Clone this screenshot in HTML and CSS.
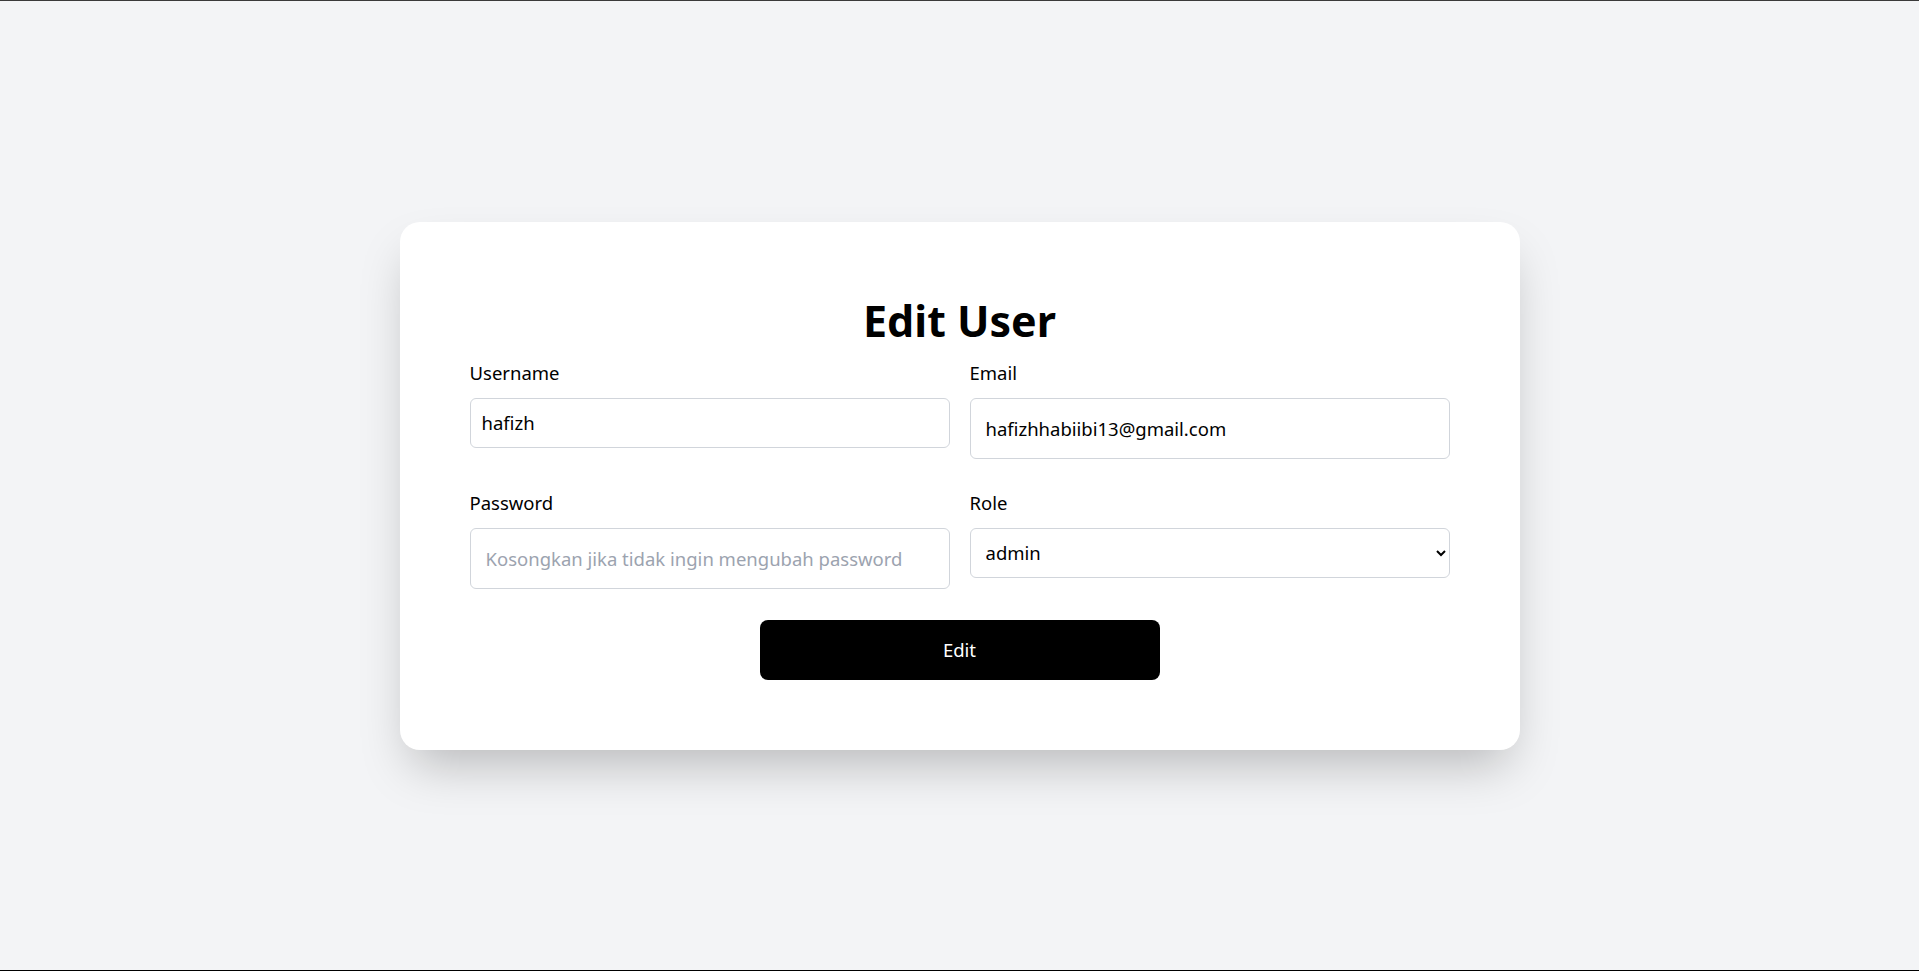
FILE: index.html
```html
<!DOCTYPE html>
<html lang="id">
<head>
<meta charset="utf-8">
<title>Edit User</title>
<link rel="stylesheet" href="styles.css">
</head>
<body>
<div class="page">
  <div class="card">
    <h1 class="title">Edit User</h1>
    <form class="form">
      <div class="grid">
        <div class="field">
          <label class="label" for="username">Username</label>
          <input class="input input-sm" id="username" type="text" value="hafizh">
        </div>
        <div class="field">
          <label class="label" for="email">Email</label>
          <input class="input input-lg" id="email" type="email" value="hafizhhabiibi13@gmail.com">
        </div>
        <div class="field">
          <label class="label" for="password">Password</label>
          <input class="input input-lg" id="password" type="password" placeholder="Kosongkan jika tidak ingin mengubah password">
        </div>
        <div class="field">
          <label class="label" for="role">Role</label>
          <select class="input select" id="role">
            <option selected>admin</option>
            <option>user</option>
          </select>
        </div>
      </div>
      <div class="actions">
        <button class="btn" type="button">Edit</button>
      </div>
    </form>
  </div>
</div>
</body>
</html>
```

FILE: styles.css
```css
* { box-sizing: border-box; }
html, body { margin: 0; padding: 0; }
body {
  font-family: "Noto Sans", "Open Sans", sans-serif;
  background: #f3f4f6;
  color: #000;
}
.page {
  height: 971px;
  border-top: 1px solid #3a3a3a;
  border-bottom: 1px solid #000;
  display: flex;
  align-items: center;
  justify-content: center;
}
.card {
  width: 1120px;
  background: #fff;
  border-radius: 20px;
  padding: 70px;
  box-shadow: 0 25px 50px -12px rgba(0, 0, 0, 0.25);
}
.title {
  margin: 0 0 11px;
  font-size: 43px;
  line-height: 58px;
  font-weight: 700;
  text-align: center;
}
.grid {
  display: grid;
  grid-template-columns: 1fr 1fr;
  column-gap: 20px;
  row-gap: 32px;
  align-items: start;
}
.field { display: flex; flex-direction: column; }
.label {
  font-size: 18.5px;
  line-height: 24px;
  margin-bottom: 13px;
}
.input {
  font-family: inherit;
  font-size: 18.5px;
  color: #000;
  border: 1px solid #d1d5db;
  border-radius: 6px;
  background: #fff;
  outline: none;
  width: 100%;
}
.input::placeholder { color: #9ca3af; }
.input-sm { height: 50px; padding: 0 11px; }
.input-lg { height: 61px; padding: 0 15px; }
.select { height: 50px; padding: 0 11px; }
.actions {
  display: flex;
  justify-content: center;
  margin-top: 31px;
}
.btn {
  width: 400px;
  height: 60px;
  background: #000;
  color: #fff;
  border: none;
  border-radius: 8px;
  font-family: inherit;
  font-size: 18.5px;
}
```
